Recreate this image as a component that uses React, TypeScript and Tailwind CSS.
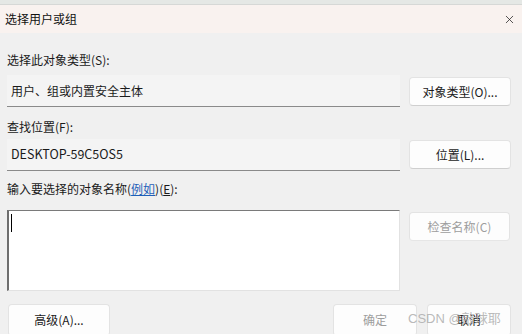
import { X } from 'lucide-react'

const font = { fontFamily: '"Noto Sans CJK SC", "Noto Sans", sans-serif' }

function Btn({ label, disabled, className = '' }: { label: string; disabled?: boolean; className?: string }) {
  return (
    <div
      className={`flex items-center justify-center rounded-[4px] border border-[#e3e3e3] border-b-[#cfcfcf] bg-[#fdfdfd] text-[12px] ${disabled ? 'text-[#9d9d9d] border-b-[#e6e6e6] bg-[#f7f7f7]' : 'text-[#1b1b1b]'} ${className}`}
    >
      {label}
    </div>
  )
}

export default function App() {
  return (
    <div className="w-[522px] h-[334px] overflow-hidden bg-[#f0f0f0] relative" style={font}>
      <div className="h-[5px] bg-[#e5e8e5] border-b border-[#d6d8d6]" />
      <div className="h-[28px] bg-[#f9f2ef] flex items-center justify-between pl-[5px] pr-[6px]">
        <span className="text-[12px] text-[#111]">选择用户或组</span>
        <X className="w-[13px] h-[13px] text-[#222]" strokeWidth={1.4} />
      </div>

      <div className="pl-[7px] pr-[11px]">
        <div className="mt-[20px] h-[14px] leading-[14px] text-[12px] text-[#1a1a1a]">选择此对象类型(S):</div>
        <div className="mt-[8px] flex gap-[9px]">
          <div className="w-[393px] h-[32px] bg-[#f4f4f4] border-b border-[#8a8a8a] flex items-center pl-[4px] text-[12px] text-[#1a1a1a]">
            用户、组或内置安全主体
          </div>
          <Btn label="对象类型(O)..." className="w-[102px] h-[29px] mt-[2px]" />
        </div>

        <div className="mt-[13px] h-[14px] leading-[14px] text-[12px] text-[#1a1a1a]">查找位置(F):</div>
        <div className="mt-[5px] flex gap-[9px]">
          <div className="w-[393px] h-[32px] bg-[#f4f4f4] border-b border-[#8a8a8a] flex items-center pl-[4px] text-[12.5px] text-[#1a1a1a]">
            DESKTOP-59C5OS5
          </div>
          <Btn label="位置(L)..." className="w-[102px] h-[29px] mt-[1px]" />
        </div>

        <div className="mt-[11px] h-[14px] leading-[14px] text-[12px] text-[#1a1a1a]">
          输入要选择的对象名称(<span className="text-[#1f5fb8] underline">例如</span>)(<span className="underline">E</span>):
        </div>
        <div className="mt-[14px] flex gap-[9px]">
          <div className="w-[393px] h-[81px] bg-white border-t border-t-[#7a7a7a] border-l-2 border-l-[#6e6e6e] border-r border-r-[#e2e2e2] border-b border-b-[#e2e2e2] pl-[2px] pt-[3px]">
            <div className="w-px h-[18px] bg-black" />
          </div>
          <Btn label="检查名称(C)" disabled className="w-[101px] h-[29px] mt-[2px]" />
        </div>

        <div className="mt-[13px] flex">
          <Btn label="高级(A)..." className="w-[102px] h-[32px] ml-[1px]" />
          <div className="flex-1" />
          <Btn label="确定" disabled className="w-[84px] h-[32px]" />
          <Btn label="取消" className="w-[84px] h-[32px] ml-[10px]" />
        </div>
      </div>

      <div className="absolute left-[408px] top-[309px] text-[13px] text-[#a8a8a8]/80 pointer-events-none" style={{ fontFamily: '"Liberation Sans", "Noto Sans CJK SC", sans-serif' }}>
        CSDN @敲球耶
      </div>
    </div>
  )
}
